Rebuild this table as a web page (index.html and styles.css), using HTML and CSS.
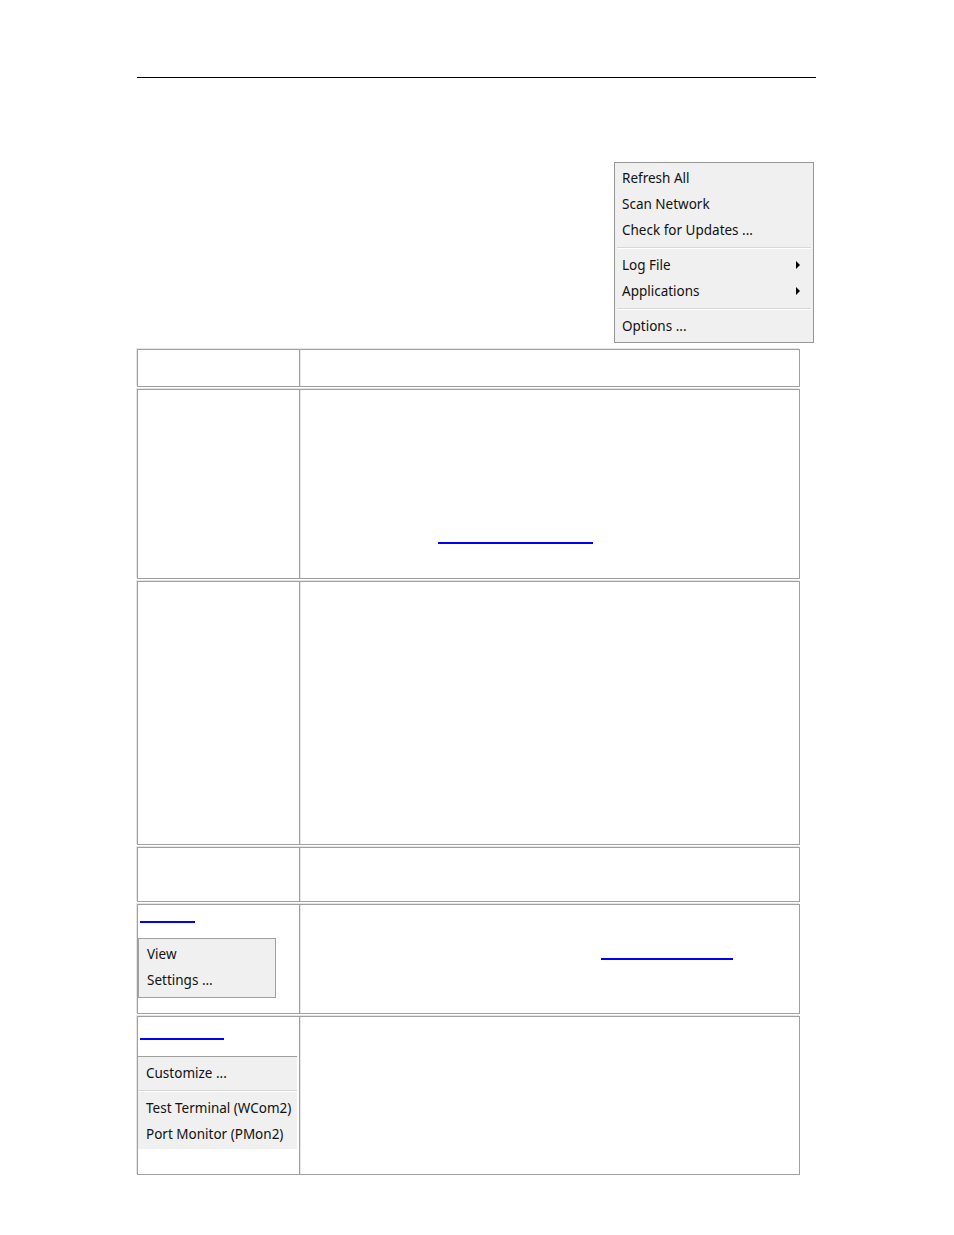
FILE: index.html
```html
<!DOCTYPE html>
<html>
<head>
<meta charset="utf-8">
<link rel="stylesheet" href="styles.css">
</head>
<body>
<div class="page">
  <div class="rule"></div>

  <div class="menu main-menu">
    <div class="item">Refresh All</div>
    <div class="item">Scan Network</div>
    <div class="item">Check for Updates ...</div>
    <div class="sep"></div>
    <div class="item sub"><span>Log File</span><i class="arrow"></i></div>
    <div class="item sub"><span>Applications</span><i class="arrow"></i></div>
    <div class="sep"></div>
    <div class="item">Options ...</div>
  </div>

  <div class="table">
    <div class="row r1">
      <div class="cell left"></div>
      <div class="cell right"></div>
    </div>
    <div class="row r2">
      <div class="cell left"></div>
      <div class="cell right"><span class="link l2"></span></div>
    </div>
    <div class="row r3">
      <div class="cell left"></div>
      <div class="cell right"></div>
    </div>
    <div class="row r4">
      <div class="cell left"></div>
      <div class="cell right"></div>
    </div>
    <div class="row r5">
      <div class="cell left">
        <span class="link l5a"></span>
        <div class="menu mini-menu">
          <div class="item">View</div>
          <div class="item">Settings ...</div>
        </div>
      </div>
      <div class="cell right"><span class="link l5b"></span></div>
    </div>
    <div class="row r6">
      <div class="cell left">
        <span class="link l6"></span>
        <div class="menu app-menu">
          <div class="item">Customize ...</div>
          <div class="sep"></div>
          <div class="item">Test Terminal (WCom2)</div>
          <div class="item">Port Monitor (PMon2)</div>
        </div>
      </div>
      <div class="cell right"></div>
    </div>
  </div>
</div>
</body>
</html>
```

FILE: styles.css
```css
html, body {
  margin: 0;
  padding: 0;
  background: #ffffff;
}

.page {
  width: 954px;
  min-height: 1235px;
  font-family: "Noto Sans", "Open Sans", sans-serif;
  color: #000;
  box-sizing: border-box;
  padding-top: 77px;
}

.rule {
  margin-left: 137px;
  width: 679px;
  border-top: 1px solid #000;
}

/* Windows-like context menus */
.menu {
  background: #f0f0f0;
  font-size: 13.5px;
  color: #111;
}

.menu .item {
  height: 26px;
  line-height: 26px;
  white-space: nowrap;
}

.menu .sep {
  height: 9px;
  box-sizing: border-box;
  padding-top: 4px;
}
.menu .sep::before {
  content: "";
  display: block;
  border-top: 1px solid #d7d7d7;
  border-bottom: 1px solid #ffffff;
}

.main-menu {
  margin-top: 84px;
  margin-left: 614px;
  width: 200px;
  height: 181px;
  box-sizing: border-box;
  border: 1px solid #979797;
  padding: 2px 13px 3px 0;
}
.main-menu .item {
  padding-left: 7px;
}
.main-menu .sep {
  margin-left: 2px;
  margin-right: -11px;
}

.sub {
  display: flex;
  justify-content: space-between;
  align-items: center;
}
.arrow {
  display: block;
  width: 0;
  height: 0;
  border-left: 4px solid #000;
  border-top: 4px solid transparent;
  border-bottom: 4px solid transparent;
}

/* Table built from separate bordered rows */
.table {
  margin-top: 6px;
  margin-left: 137px;
  width: 663px;
  display: flex;
  flex-direction: column;
  gap: 2px;
}

.row {
  display: grid;
  grid-template-columns: 162px 1fr;
  box-sizing: border-box;
  border: 1px solid #a0a0a0;
  box-shadow: -1px -1px 0 #e6e6e6;
}
.r1 { height: 38px; }
.r2 { height: 190px; }
.r3 { height: 264px; }
.r4 { height: 55px; }
.r5 { height: 110px; }
.r6 { height: 159px; }

.cell.left {
  border-right: 1px solid #a0a0a0;
  box-shadow: 1px 0 0 #e6e6e6;
}

.link {
  display: block;
  height: 0;
  border-bottom: 2px solid #0000ff;
}
.l2 {
  margin-left: 138px;
  margin-top: 152px;
  width: 155px;
}
.l5a {
  margin-left: 2px;
  margin-top: 16px;
  width: 55px;
}
.l5b {
  margin-left: 301px;
  margin-top: 53px;
  width: 132px;
}
.l6 {
  margin-left: 2px;
  margin-top: 21px;
  width: 84px;
}

.mini-menu {
  margin-top: 15px;
  width: 138px;
  height: 60px;
  box-sizing: border-box;
  border: 1px solid #a0a0a0;
  padding: 2px 0 2px 8px;
}

.app-menu {
  margin-top: 16px;
  width: 159px;
  border-top: 1px solid #a0a0a0;
  padding: 3px 0 2px 0;
}
.app-menu .item {
  padding-left: 8px;
}
```
